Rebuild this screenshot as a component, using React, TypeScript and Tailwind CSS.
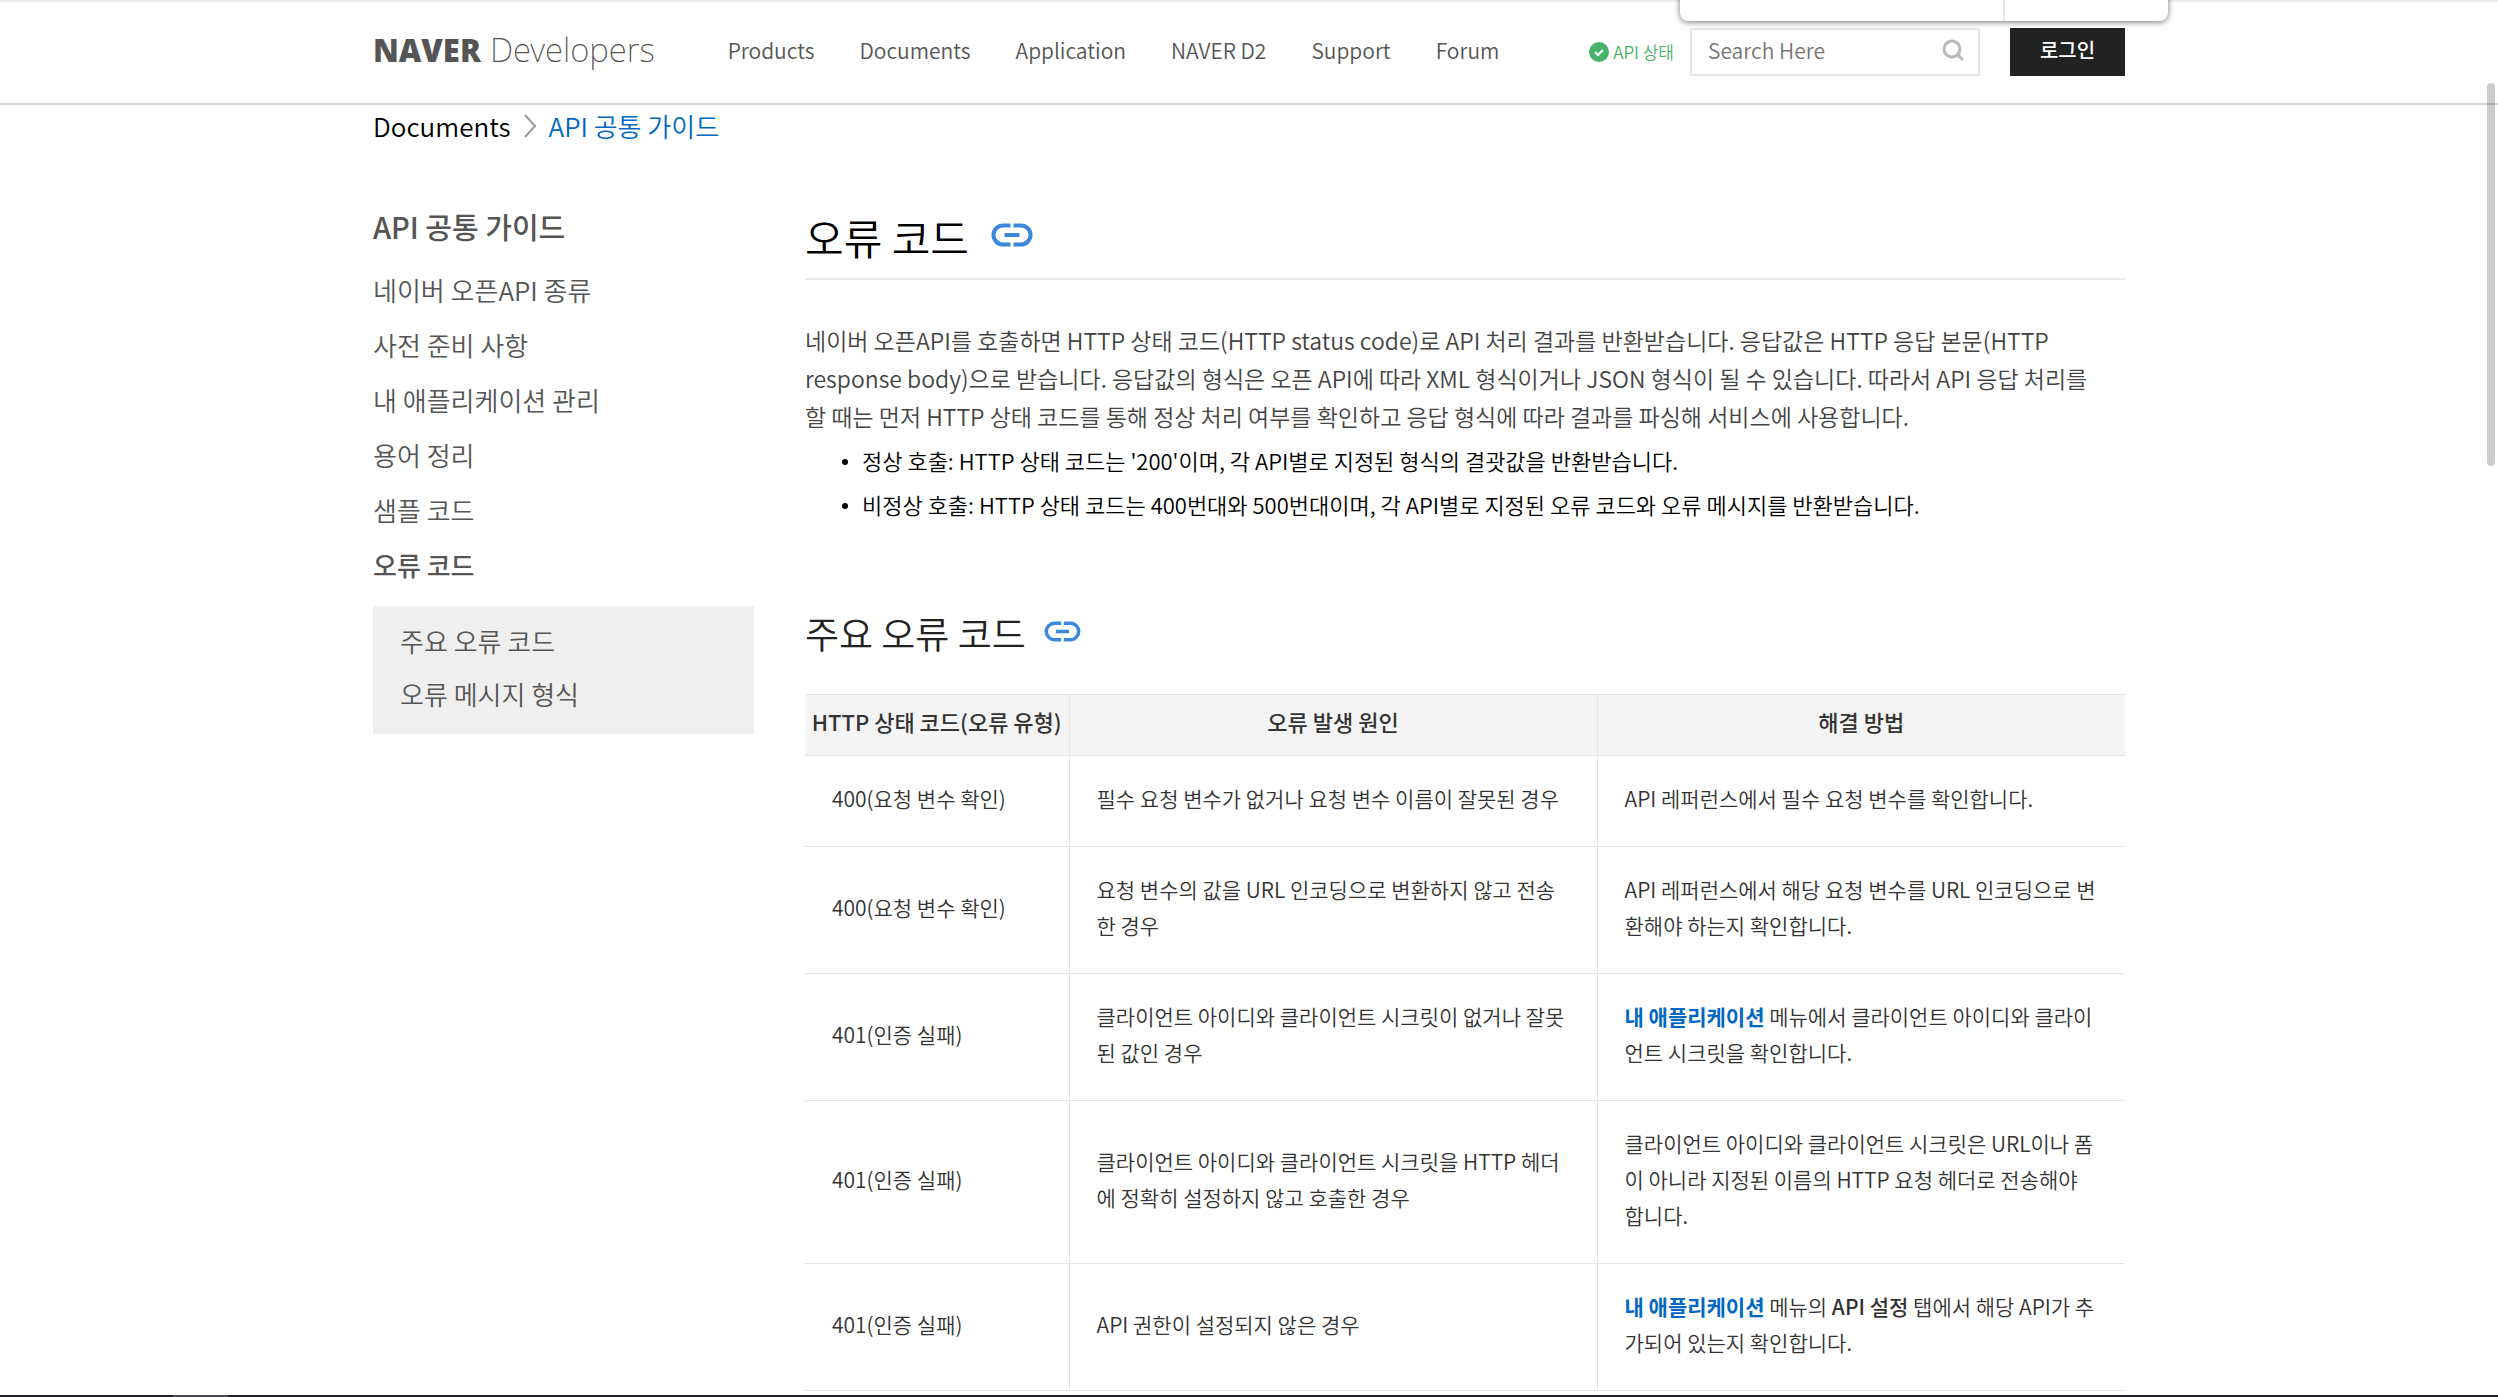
import type { ReactNode } from 'react';
import { Search } from 'lucide-react';

const navLinks = ['Products', 'Documents', 'Application', 'NAVER D2', 'Support', 'Forum'];

const guideLinks = [
  { label: '네이버 오픈API 종류' },
  { label: '사전 준비 사항' },
  { label: '내 애플리케이션 관리' },
  { label: '용어 정리' },
  { label: '샘플 코드' },
  { label: '오류 코드', active: true },
];

const subLinks = ['주요 오류 코드', '오류 메시지 형식'];

const callNotes = [
  "정상 호출: HTTP 상태 코드는 '200'이며, 각 API별로 지정된 형식의 결괏값을 반환받습니다.",
  '비정상 호출: HTTP 상태 코드는 400번대와 500번대이며, 각 API별로 지정된 오류 코드와 오류 메시지를 반환받습니다.',
];

const appLink = (
  <a href="#" className="font-bold text-[#0068c3]">내 애플리케이션</a>
);

const errorRows: { code: string; cause: ReactNode; fix: ReactNode }[] = [
  {
    code: '400(요청 변수 확인)',
    cause: '필수 요청 변수가 없거나 요청 변수 이름이 잘못된 경우',
    fix: 'API 레퍼런스에서 필수 요청 변수를 확인합니다.',
  },
  {
    code: '400(요청 변수 확인)',
    cause: <>요청 변수의 값을 URL 인코딩으로 변환하지 않고 전송<br />한 경우</>,
    fix: <>API 레퍼런스에서 해당 요청 변수를 URL 인코딩으로 변<br />환해야 하는지 확인합니다.</>,
  },
  {
    code: '401(인증 실패)',
    cause: <>클라이언트 아이디와 클라이언트 시크릿이 없거나 잘못<br />된 값인 경우</>,
    fix: <>{appLink} 메뉴에서 클라이언트 아이디와 클라이<br />언트 시크릿을 확인합니다.</>,
  },
  {
    code: '401(인증 실패)',
    cause: <>클라이언트 아이디와 클라이언트 시크릿을 HTTP 헤더<br />에 정확히 설정하지 않고 호출한 경우</>,
    fix: <>클라이언트 아이디와 클라이언트 시크릿은 URL이나 폼<br />이 아니라 지정된 이름의 HTTP 요청 헤더로 전송해야<br />합니다.</>,
  },
  {
    code: '401(인증 실패)',
    cause: 'API 권한이 설정되지 않은 경우',
    fix: <>{appLink} 메뉴의 <strong className="font-medium">API 설정</strong> 탭에서 해당 API가 추<br />가되어 있는지 확인합니다.</>,
  },
];

function LinkIcon({ className }: { className: string }) {
  return (
    <svg viewBox="0 0 42 24" className={className} fill="none" stroke="#3a87dc" strokeWidth="4">
      <path d="M19.500 2.500H12a9.500 9.500 0 0 0 0 19h7.500M22.500 2.500H30a9.500 9.500 0 0 1 0 19h-7.500M13.500 12h15" />
    </svg>
  );
}

function Header() {
  return (
    <header className="border-t-2 border-b-2 border-t-[#ededed] border-b-[#d4d4d4]">
      <div className="relative mx-auto flex h-[101px] max-w-[1752px] items-center pb-px">
        {/* Logo */}
        <a href="#" className="flex items-baseline gap-[9px] pb-1 text-[#555]">
          <span className="font-['Open_Sans'] text-[31px] leading-[36px] font-extrabold">NAVER</span>
          <span className="font-['Noto_Sans'] text-[33px] leading-[36px] font-extralight">Developers</span>
        </a>

        <nav className="ml-[73px] flex gap-[45px] pb-1 text-[21px] leading-[28px] text-[#555]">
          {navLinks.map((label) => (
            <a key={label} href="#">{label}</a>
          ))}
        </nav>

        <div className="ml-auto flex items-center">
          <a href="#" className="flex items-center gap-1 text-[17px] text-[#46b36b]">
            <svg viewBox="0 0 20 20" className="size-5">
              <circle cx="10" cy="10" r="10" fill="#46b36b" />
              <path d="M6 10l3 3 5-5" fill="none" stroke="#fff" strokeWidth="2" />
            </svg>
            API 상태
          </a>
          <form className="ml-4 flex h-12 w-[290px] items-center border-2 border-[#e6e6e6] pr-[13px] pb-1 pl-4">
            <input
              type="text"
              aria-label="Search Here"
              placeholder="Search Here"
              className="min-w-0 flex-1 text-[21px] leading-[28px] text-[#333] outline-none placeholder:text-[#757575]"
            />
            <button type="button" aria-label="Search">
              <Search size={24} strokeWidth={3} className="text-[#b9b9b9]" />
            </button>
          </form>
          <button className="ml-[30px] h-12 w-[115px] bg-[#222] pb-1 text-[20px] font-medium text-white">
            로그인
          </button>
        </div>

        {/* Panel hanging over the search box */}
        <div className="absolute -top-4 -right-[43px] flex h-[35px] w-[488px] rounded-b-lg bg-white shadow-[0_1px_6px_rgba(0,0,0,0.55)]">
          <div className="w-[325px] border-r-2 border-[#e6e6e6]" />
        </div>
      </div>
    </header>
  );
}

function Sidebar() {
  return (
    <aside className="w-[381px] shrink-0 text-[26px] text-[#555]">
      <h2 className="text-[29px] leading-[42px] font-medium">API 공통 가이드</h2>
      <ul className="mt-[15px]">
        {guideLinks.map((link) => (
          <li key={link.label} className="leading-[55px]">
            <a href="#" className={link.active ? 'font-medium' : ''}>{link.label}</a>
          </li>
        ))}
      </ul>
      <ul className="mt-[14px] bg-[#efefef] px-[27px] pt-2 pb-[14px]">
        {subLinks.map((label) => (
          <li key={label} className="leading-[53px]">
            <a href="#">{label}</a>
          </li>
        ))}
      </ul>
    </aside>
  );
}

export default function App() {
  return (
    <div className="min-h-screen bg-white font-['Noto_Sans_CJK_KR',sans-serif] font-[350] text-black">
      <Header />

      <div className="mx-auto max-w-[1752px]">
        {/* Breadcrumb */}
        <div className="flex items-center gap-3 text-[26px] leading-[42px]">
          <a href="#">Documents</a>
          <svg viewBox="0 0 14 24" className="h-6 w-[14px]" fill="none" stroke="#999" strokeWidth="2">
            <path d="M2 1l10 11L2 23" />
          </svg>
          <a href="#" className="text-[#0068c3]">API 공통 가이드</a>
        </div>

        <div className="flex gap-[51px] pt-[58px]">
          <Sidebar />

          <main className="min-w-0 flex-1">
            <div className="flex items-center gap-[22px] border-b-2 border-[#e8e8e8] pb-[9px]">
              <h1 className="text-[42px] leading-[64px]">오류 코드</h1>
              <a href="#" aria-label="오류 코드" className="pb-1"><LinkIcon className="h-6 w-[42px]" /></a>
            </div>

            <p className="mt-[41px] text-[23px] leading-[38px] text-[#444]">
              네이버 오픈API를 호출하면 HTTP 상태 코드(HTTP status code)로 API 처리 결과를 반환받습니다. 응답값은 HTTP 응답 본문(HTTP<br />
              response body)으로 받습니다. 응답값의 형식은 오픈 API에 따라 XML 형식이거나 JSON 형식이 될 수 있습니다. 따라서 API 응답 처리를<br />
              할 때는 먼저 HTTP 상태 코드를 통해 정상 처리 여부를 확인하고 응답 형식에 따라 결과를 파싱해 서비스에 사용합니다.
            </p>
            <ul className="mt-[3px] pl-[37px] text-[22px] leading-[44px]">
              {callNotes.map((note) => (
                <li key={note} className="flex items-center gap-[14px]">
                  <span className="mt-1 size-[6px] rounded-full bg-black" />
                  {note}
                </li>
              ))}
            </ul>

            <div className="mt-[83px] flex items-center gap-[18px] text-[#222]">
              <h2 className="text-[37px] leading-[48px]">주요 오류 코드</h2>
              <a href="#" aria-label="주요 오류 코드" className="pb-1"><LinkIcon className="h-[21px] w-[37px]" /></a>
            </div>

            <table className="mt-[37px] w-full table-fixed border-collapse text-[21px] leading-[36px] text-[#333]">
              <thead>
                <tr className="border-y border-[#e5e5e5] bg-[#f4f4f4] text-[22px]">
                  <th className="w-1/5 border-r border-[#e5e5e5] pt-2 pb-4 font-medium whitespace-nowrap">HTTP 상태 코드(오류 유형)</th>
                  <th className="w-2/5 border-r border-[#e5e5e5] pt-2 pb-4 font-medium">오류 발생 원인</th>
                  <th className="w-2/5 pt-2 pb-4 font-medium">해결 방법</th>
                </tr>
              </thead>
              <tbody>
                {errorRows.map((row, i) => (
                  <tr key={i} className="border-b border-[#e5e5e5]">
                    <td className="border-r border-[#e5e5e5] px-[27px] pt-6 pb-[30px] whitespace-nowrap">{row.code}</td>
                    <td className="border-r border-[#e5e5e5] px-[27px] pt-6 pb-[30px] whitespace-nowrap">{row.cause}</td>
                    <td className="px-[27px] pt-6 pb-[30px] whitespace-nowrap">{row.fix}</td>
                  </tr>
                ))}
              </tbody>
            </table>
          </main>
        </div>
      </div>

      {/* Scroll thumb and taskbar edge stay over the page */}
      <div className="fixed top-[83px] right-[3px] h-[383px] w-2 rounded-full bg-black/20" />
      <div className="fixed inset-x-0 bottom-0 flex h-[2px] bg-[#1c1d26]">
        <div className="ml-[173px] w-[55px] bg-[#4a4850]" />
      </div>
    </div>
  );
}
